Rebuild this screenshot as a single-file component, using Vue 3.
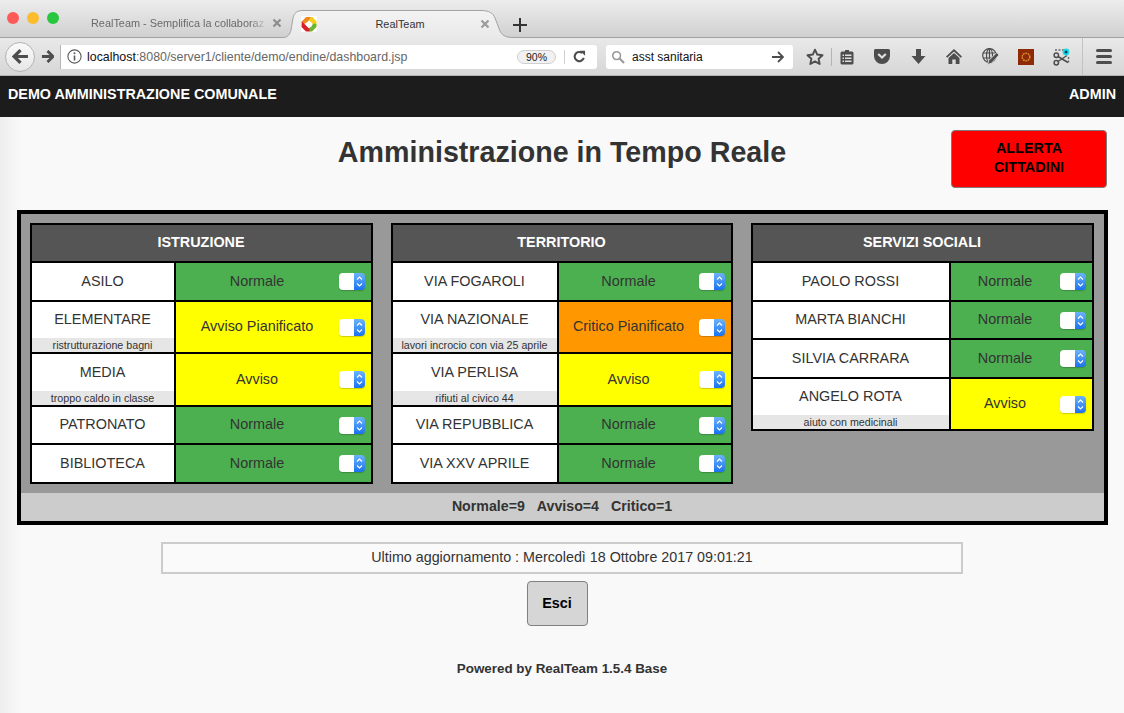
<script setup>
const tables = [
  {
    title: 'ISTRUZIONE', cls: 't1',
    rows: [
      { name: 'ASILO', state: 'Normale', color: 'green', h: 'h37' },
      { name: 'ELEMENTARE', sub: 'ristrutturazione bagni', state: 'Avviso Pianificato', color: 'yellow', h: 'h50' },
      { name: 'MEDIA', sub: 'troppo caldo in classe', state: 'Avviso', color: 'yellow', h: 'h51' },
      { name: 'PATRONATO', state: 'Normale', color: 'green', h: 'h36' },
      { name: 'BIBLIOTECA', state: 'Normale', color: 'green', h: 'h37' }
    ]
  },
  {
    title: 'TERRITORIO', cls: 't2',
    rows: [
      { name: 'VIA FOGAROLI', state: 'Normale', color: 'green', h: 'h37' },
      { name: 'VIA NAZIONALE', sub: 'lavori incrocio con via 25 aprile', state: 'Critico Pianificato', color: 'orange', h: 'h50' },
      { name: 'VIA PERLISA', sub: 'rifiuti al civico 44', state: 'Avviso', color: 'yellow', h: 'h51' },
      { name: 'VIA REPUBBLICA', state: 'Normale', color: 'green', h: 'h36' },
      { name: 'VIA XXV APRILE', state: 'Normale', color: 'green', h: 'h37' }
    ]
  },
  {
    title: 'SERVIZI SOCIALI', cls: 't3',
    rows: [
      { name: 'PAOLO ROSSI', state: 'Normale', color: 'green', h: 'h37' },
      { name: 'MARTA BIANCHI', state: 'Normale', color: 'green', h: 'h36' },
      { name: 'SILVIA CARRARA', state: 'Normale', color: 'green', h: 'h37' },
      { name: 'ANGELO ROTA', sub: 'aiuto con medicinali', state: 'Avviso', color: 'yellow', h: 'h50' }
    ]
  }
]
</script>

<template>
  <div class="app">
    <header class="titlebar">
      <div class="lights">
        <span class="light red"></span>
        <span class="light amber"></span>
        <span class="light lime"></span>
      </div>
      <div class="tab inactive">
        <span class="tab-text">RealTeam - Semplifica la collaboraz</span>
        <svg class="close" width="10" height="10" viewBox="0 0 10 10"><path d="M1.5 1.5l7 7M8.5 1.5l-7 7" stroke="#8c8c8c" stroke-width="2.2" /></svg>
      </div>
      <div class="tab active">
        <svg class="tab-shape" width="230" height="28" viewBox="0 0 230 28">
          <defs>
            <linearGradient id="tabfill" x1="0" y1="0" x2="0" y2="1">
              <stop offset="0" stop-color="#f3f3f3" />
              <stop offset="1" stop-color="#e9e9e9" />
            </linearGradient>
          </defs>
          <path d="M0 28V27.5C5 27.5 7 24 8 20L10 8C11 3 14 .5 20 .5H198C206 .5 210 3 212 8L217 21C219 25 222 27.5 230 27.5V28Z" fill="url(#tabfill)" />
          <path d="M0 27.5C5 27.5 7 24 8 20L10 8C11 3 14 .5 20 .5H198C206 .5 210 3 212 8L217 21C219 25 222 27.5 230 27.5" fill="none" stroke="#a2a2a2" />
        </svg>
        <svg class="favicon" width="16" height="16" viewBox="0 0 16 16">
          <rect width="16" height="16" fill="#fff" />
          <path d="M5 1H10L8 5 5.5 6.5 3.5 8 .8 5.5Z" fill="#ee8a1c" />
          <path d="M10 1H11.5L15.5 5.5V8.5L12 8 8 4.5Z" fill="#f4cf17" />
          <path d="M15.5 8V11L11 15.5H8L6.5 13 10.5 10.5 12 7.5Z" fill="#6fb52e" />
          <path d="M.7 5L4 8.5 8.5 13 8.5 15.5H5L.5 11Z" fill="#d81f26" />
          <path d="M8 4.6L11.4 8 8 11.4 4.6 8Z" fill="#fff" />
        </svg>
        <span class="tab-title">RealTeam</span>
        <svg class="close" width="10" height="10" viewBox="0 0 10 10"><path d="M1.5 1.5l7 7M8.5 1.5l-7 7" stroke="#9a9a9a" stroke-width="2.2" /></svg>
      </div>
      <svg class="plus" width="14" height="14" viewBox="0 0 14 14"><path d="M7 0V14M0 7H14" stroke="#333" stroke-width="2" /></svg>
    </header>

    <div class="toolbar">
      <div class="back">
        <svg width="17" height="17" viewBox="0 0 16 16"><path d="M8 2L2 8l6 6M2.5 8H15" fill="none" stroke="#4d4d4d" stroke-width="3" /></svg>
      </div>
      <div class="forward">
        <svg width="13" height="13" viewBox="0 0 14 14"><path d="M7 1l6 6-6 6M12 7H1" fill="none" stroke="#4d4d4d" stroke-width="3" /></svg>
      </div>
      <div class="url">
        <svg class="info" width="15" height="15" viewBox="0 0 15 15">
          <circle cx="7.5" cy="7.5" r="6.6" fill="none" stroke="#5a5a5a" stroke-width="1.1" />
          <path d="M7.5 6.5V11.5" stroke="#5a5a5a" stroke-width="1.6" />
          <circle cx="7.5" cy="4.3" r="1" fill="#5a5a5a" />
        </svg>
        <span class="url-text"><span class="host">localhost</span>:8080/server1/cliente/demo/endine/dashboard.jsp</span>
        <span class="zoom-badge">90%</span>
        <span class="url-sep"></span>
        <span class="reload">
          <svg width="13" height="13" viewBox="0 0 14 14">
            <path d="M11.6 8.5A5 5 0 1 1 10 3.2" fill="none" stroke="#4d4d4d" stroke-width="2.2" />
            <path d="M7.5 .8H13V6.3Z" fill="#4d4d4d" />
          </svg>
        </span>
      </div>
      <div class="search">
        <svg class="lens" width="14" height="14" viewBox="0 0 15 15">
          <circle cx="6" cy="6" r="4.2" fill="none" stroke="#999" stroke-width="1.7" />
          <path d="M9.2 9.2L14 14" stroke="#999" stroke-width="2.2" />
        </svg>
        <span class="search-text">asst sanitaria</span>
        <svg width="12" height="12" viewBox="0 0 12 12"><path d="M6 1l5 5-5 5M10.5 6H0" fill="none" stroke="#4d4d4d" stroke-width="1.8" /></svg>
      </div>
      <span class="slot star">
        <svg width="18" height="18" viewBox="0 0 17 17"><path d="M8.5 1.6l2.1 4.6 5 .6-3.7 3.4 1 4.9-4.4-2.5-4.4 2.5 1-4.9L1.4 6.8l5-.6Z" fill="none" stroke="#4d4d4d" stroke-width="1.8" stroke-linejoin="round" /></svg>
      </span>
      <span class="vsep"></span>
      <span class="slot clip">
        <svg width="14" height="16" viewBox="0 0 14 16">
          <path d="M5 2.5V1h4v1.5h3A1.5 1.5 0 0 1 13.5 4v10A1.5 1.5 0 0 1 12 15.5H2A1.5 1.5 0 0 1 .5 14V4A1.5 1.5 0 0 1 2 2.5Z" fill="#4d4d4d" />
          <path d="M2.5 5.5h1.5v1.5H2.5ZM5 5.5h6.5v1.5H5ZM2.5 8.5h1.5v1.5H2.5ZM5 8.5h6.5v1.5H5ZM2.5 11.5h1.5v1.5H2.5ZM5 11.5h6.5v1.5H5Z" fill="#e0e0e0" />
        </svg>
      </span>
      <span class="slot">
        <svg width="16" height="15" viewBox="0 0 16 15">
          <path d="M1.5 0h13A1.5 1.5 0 0 1 16 1.5V7A8 8 0 0 1 0 7V1.5A1.5 1.5 0 0 1 1.5 0Z" fill="#4d4d4d" />
          <path d="M4.2 5l3.8 3.6L11.8 5" fill="none" stroke="#e0e0e0" stroke-width="2.2" />
        </svg>
      </span>
      <span class="slot">
        <svg width="15" height="15" viewBox="0 0 15 15"><path d="M5 0h5v7h4.5L7.5 15 .5 7H5Z" fill="#4d4d4d" /></svg>
      </span>
      <span class="slot">
        <svg width="16" height="15" viewBox="0 0 16 15">
          <path d="M8 0L16 7.5 14.800 8.800 8 2.500 1.200 8.800 0 7.500Z" fill="#4d4d4d" />
          <path d="M8 4L13.500 9V15H9.700V10.500H6.300V15H2.500V9Z" fill="#4d4d4d" />
        </svg>
      </span>
      <span class="slot">
        <svg width="17" height="17" viewBox="0 0 17 17">
          <g fill="none" stroke="#4d4d4d" stroke-width="1.2">
            <circle cx="7.5" cy="7.5" r="6.8" />
            <ellipse cx="7.5" cy="7.5" rx="3" ry="6.8" />
            <path d="M1 5H14M1 10H14M7.5 .7V14.3" />
          </g>
          <path d="M14.8 4.500L6.800 12.500 5.500 16.500 9.500 15.200 17 7Z" fill="#4d4d4d" stroke="#dcdcdc" stroke-width=".9" />
        </svg>
      </span>
      <span class="slot">
        <svg width="16" height="16" viewBox="0 0 16 16">
          <rect width="16" height="16" fill="#8f2a08" />
          <circle cx="8" cy="8" r="3.8" fill="none" stroke="#d9932a" stroke-width="1.5" stroke-dasharray="1.6 .8" />
        </svg>
      </span>
      <span class="slot">
        <svg width="18" height="18" viewBox="0 0 18 18">
          <path d="M2 2h9M15.5 9v6" fill="none" stroke="#666" stroke-width="1.4" stroke-dasharray="2 1.5" />
          <circle cx="3.3" cy="14.7" r="2.2" fill="none" stroke="#4d4d4d" stroke-width="1.5" />
          <circle cx="3.3" cy="7.3" r="2.2" fill="none" stroke="#4d4d4d" stroke-width="1.5" />
          <path d="M5 8.500L15 14.500M5 13.500L14 7.500" stroke="#4d4d4d" stroke-width="1.5" />
          <circle cx="13" cy="4" r="3.4" fill="#18dbe6" />
          <circle cx="13" cy="4" r="1.5" fill="#14406a" />
        </svg>
      </span>
      <span class="vsep end"></span>
      <span class="slot burger">
        <span class="bar"></span><span class="bar"></span><span class="bar"></span>
      </span>
    </div>

    <nav class="navbar">
      <span>DEMO AMMINISTRAZIONE COMUNALE</span>
      <span>ADMIN</span>
    </nav>

    <main class="page">
      <div class="heading">
        <span></span>
        <h1>Amministrazione in Tempo Reale</h1>
        <button class="alert" type="button">ALLERTA<br />CITTADINI</button>
      </div>

      <section class="panel">
        <div class="boards">
          <div v-for="t in tables" :key="t.title" class="board" :class="t.cls">
            <div class="board-head">{{ t.title }}</div>
            <template v-for="r in t.rows" :key="r.name">
              <div class="who" :class="r.h">
                <span class="name">{{ r.name }}</span>
                <span v-if="r.sub" class="sub">{{ r.sub }}</span>
              </div>
              <div class="state" :class="[r.h, r.color]">
                <span class="state-label">{{ r.state }}</span>
                <span class="toggle">
                  <span class="toggle-white"></span>
                  <span class="toggle-blue">
                    <svg width="7" height="13" viewBox="0 0 7 13"><path d="M1 4.5L3.5 2 6 4.5M1 8.5L3.5 11 6 8.5" fill="none" stroke="#fff" stroke-width="1.1" /></svg>
                  </span>
                </span>
              </div>
            </template>
          </div>
        </div>
        <div class="totals">
          <span>Normale=9</span><span>Avviso=4</span><span>Critico=1</span>
        </div>
      </section>

      <div class="updated">Ultimo aggiornamento : Mercoledì 18 Ottobre 2017 09:01:21</div>
      <button class="exit" type="button">Esci</button>
      <p class="powered">Powered by RealTeam 1.5.4 Base</p>
    </main>
  </div>
</template>

<style>
html, body {
  margin: 0;
  background: #f9f9f9;
}
</style>

<style scoped>
.app {
  width: 1124px;
  height: 713px;
  overflow: hidden;
  font-family: "Liberation Sans", Arial, sans-serif;
  color: #333;
  display: flex;
  flex-direction: column;
}

/* browser title bar */
.titlebar {
  height: 37px;
  flex: none;
  display: flex;
  align-items: flex-end;
  background: linear-gradient(#ededed, #d0d0d0);
  border-bottom: 1px solid #a2a2a2;
}
.lights {
  display: flex;
  gap: 8px;
  padding-left: 7px;
  align-self: flex-start;
  padding-top: 12px;
}
.light {
  width: 12px;
  height: 12px;
  border-radius: 50%;
}
.red { background: #fc5b57; }
.amber { background: #fdbb2e; }
.lime { background: #29c73f; }
.tab {
  display: flex;
  align-items: center;
  height: 28px;
  font-size: 10.9px;
}
.inactive {
  width: 224px;
  box-sizing: border-box;
  padding-left: 32px;
  color: #6a6a6a;
}
.tab-text {
  width: 177px;
  white-space: nowrap;
  margin-right: 4px;
  -webkit-mask-image: linear-gradient(90deg, #000 90%, transparent);
  mask-image: linear-gradient(90deg, #000 90%, transparent);
}
.active {
  position: relative;
  width: 230px;
  margin-bottom: -1px;
  color: #333;
}
.tab-shape {
  position: absolute;
  left: 0;
  top: 0;
}
.favicon {
  position: relative;
  margin-left: 18px;
  flex: none;
}
.tab-title {
  position: relative;
  width: 166px;
  text-align: center;
}
.active .close {
  position: relative;
  margin-left: -3px;
}
.plus {
  margin-bottom: 5px;
}

/* browser toolbar */
.toolbar {
  height: 37px;
  flex: none;
  display: flex;
  align-items: center;
  padding-left: 5px;
  background: linear-gradient(#e9e9e9, #d6d6d6);
  border-bottom: 1px solid #b3b3b3;
}
.back {
  position: relative;
  z-index: 1;
  width: 30px;
  height: 30px;
  box-sizing: border-box;
  border: 1px solid #b4b4b4;
  border-radius: 50%;
  background: linear-gradient(#fafafa, #e6e6e6);
  display: flex;
  align-items: center;
  justify-content: center;
}
.forward {
  width: 25px;
  display: flex;
  justify-content: center;
}
.url {
  width: 537px;
  height: 24px;
  box-sizing: border-box;
  display: flex;
  align-items: center;
  background: #fff;
  border-left: 1px solid #b5b5b5;
  border-radius: 0 3px 3px 0;
  padding-left: 6px;
  font-size: 12.4px;
  color: #666;
}
.info {
  flex: none;
  margin-right: 5px;
}
.url-text {
  flex: 1;
  white-space: nowrap;
}
.host {
  color: #111;
}
.zoom-badge {
  width: 39px;
  height: 14px;
  box-sizing: border-box;
  border: 1px solid #cfcfcf;
  border-radius: 7px;
  background: #f1f1f1;
  color: #222;
  font-size: 10.5px;
  line-height: 12px;
  text-align: center;
}
.url-sep {
  width: 1px;
  height: 14px;
  margin-left: 8px;
  background: #d0d0d0;
}
.reload {
  width: 32px;
  box-sizing: border-box;
  padding-right: 4px;
  display: flex;
  justify-content: center;
}
.search {
  width: 187px;
  height: 24px;
  box-sizing: border-box;
  margin-left: 9px;
  padding: 0 9px 0 5px;
  display: flex;
  align-items: center;
  background: #fff;
  border-radius: 3px;
  font-size: 12px;
  color: #111;
}
.lens {
  flex: none;
}
.search-text {
  flex: 1;
  padding-left: 7px;
}
.slot {
  width: 36px;
  height: 24px;
  display: flex;
  align-items: center;
  justify-content: center;
}
.star {
  width: 37px;
  margin-left: 1px;
  box-sizing: border-box;
  justify-content: flex-end;
  padding-right: 7px;
}
.vsep {
  width: 1px;
  height: 18px;
  background: #b4b4b4;
}
.vsep.end {
  height: 37px;
  background: #c2c2c2;
  margin-left: 2px;
}
.clip {
  width: 29px;
  margin-right: 3px;
}
.burger {
  width: 41px;
  flex-direction: column;
  gap: 3px;
}
.bar {
  width: 16px;
  height: 3px;
  border-radius: 1.5px;
  background: #4d4d4d;
}

/* application */
.navbar {
  height: 41px;
  flex: none;
  display: flex;
  justify-content: space-between;
  align-items: center;
  padding: 0 8px 5px;
  box-sizing: border-box;
  background: #1c1c1c;
  color: #fff;
  font-size: 14.35px;
  font-weight: 700;
}
.page {
  flex: 1;
  padding: 13px 17px 0;
  display: flex;
  flex-direction: column;
  align-items: center;
  background: linear-gradient(90deg, #eeeeee, #f9f9f9 22px);
}
.heading {
  width: 100%;
  display: grid;
  grid-template-columns: 1fr auto 1fr;
  align-items: start;
  margin-bottom: 22px;
}
h1 {
  margin: 4px 0 0;
  font-size: 28.65px;
  line-height: 36px;
  font-weight: 700;
  color: #333;
  white-space: nowrap;
}
.alert {
  justify-self: end;
  width: 156px;
  height: 58px;
  padding: 0 0 2px;
  border: 1px solid #7d7d7d;
  border-radius: 4px;
  background: #f00;
  color: #000;
  font: 700 14.4px/19px "Liberation Sans", Arial, sans-serif;
}
.panel {
  width: 1091px;
  box-sizing: border-box;
  border: 4px solid #000;
  background: #999;
}
.boards {
  height: 279px;
  box-sizing: border-box;
  display: flex;
  align-items: flex-start;
  justify-content: space-between;
  padding: 9px 10px 0 9px;
}
.board {
  display: grid;
  gap: 2px;
  padding: 2px;
  background: #000;
}
.t1 { grid-template-columns: 142px 195px; }
.t2 { grid-template-columns: 164px 172px; }
.t3 { grid-template-columns: 196px 141px; }
.board-head {
  grid-column: 1 / -1;
  height: 36px;
  box-sizing: border-box;
  padding-bottom: 2px;
  display: flex;
  align-items: center;
  justify-content: center;
  background: #555;
  color: #fff;
  font-size: 14.4px;
  font-weight: 700;
}
.h36 { height: 36px; }
.h37 { height: 37px; }
.h50 { height: 50px; }
.h51 { height: 51px; }
.who {
  display: flex;
  flex-direction: column;
  background: #fff;
  font-size: 14.4px;
}
.name {
  flex: 1;
  padding-bottom: 2px;
  display: flex;
  align-items: center;
  justify-content: center;
  white-space: nowrap;
}
.sub {
  height: 14px;
  line-height: 14px;
  text-align: center;
  background: #e6e6e6;
  font-size: 10.7px;
  white-space: nowrap;
}
.state {
  display: flex;
  align-items: center;
  font-size: 14.4px;
}
.green { background: #4caf50; }
.yellow { background: #ff0; }
.orange { background: #ff9800; }
.state-label {
  flex: 1;
  padding-bottom: 2px;
  text-align: center;
  white-space: nowrap;
}
.toggle {
  flex: none;
  width: 26px;
  height: 17px;
  margin-right: 6px;
  display: flex;
  border-radius: 4px;
  overflow: hidden;
  box-shadow: 0 1px 1px rgba(0, 0, 0, 0.2);
}
.toggle-white {
  flex: 1;
  background: #fff;
}
.toggle-blue {
  width: 11px;
  display: flex;
  align-items: center;
  justify-content: center;
  background: linear-gradient(#6cb3fb, #1a72f0);
}
.totals {
  height: 28px;
  box-sizing: border-box;
  padding-bottom: 2px;
  display: flex;
  justify-content: center;
  align-items: center;
  gap: 12px;
  background: #ccc;
  font-size: 14.2px;
  font-weight: 700;
}
.updated {
  width: 802px;
  height: 32px;
  box-sizing: border-box;
  margin-top: 17px;
  border: 2px solid #ccc;
  background: #fafafa;
  text-align: center;
  font-size: 14.3px;
  line-height: 27px;
}
.exit {
  width: 61px;
  height: 45px;
  margin-top: 7px;
  margin-right: 10px;
  padding: 0 0 2px;
  border: 1px solid #808080;
  border-radius: 4px;
  background: #d6d6d6;
  color: #000;
  font: 700 14.4px "Liberation Sans", Arial, sans-serif;
}
.powered {
  margin: 35px 0 0;
  font-size: 13.4px;
  line-height: 16px;
  font-weight: 700;
}
</style>
